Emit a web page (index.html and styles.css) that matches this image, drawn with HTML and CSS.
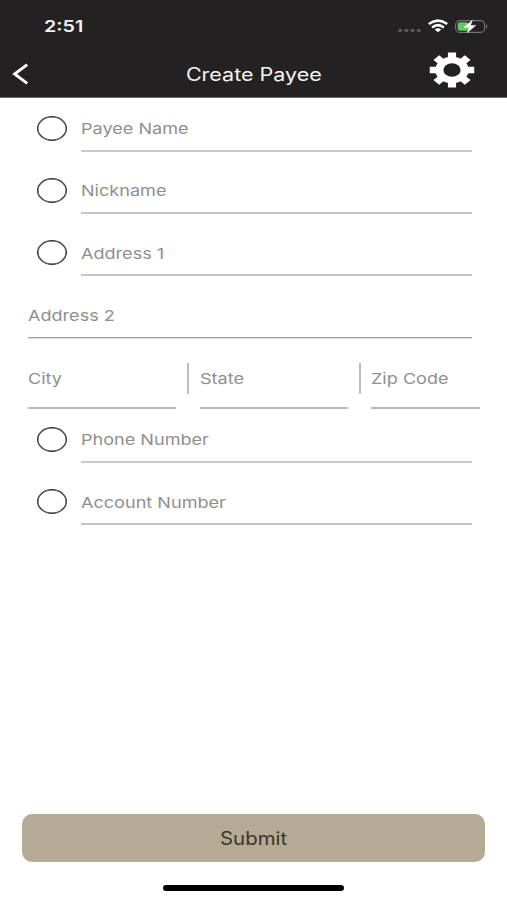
FILE: index.html
```html
<!DOCTYPE html>
<html lang="en">
<head>
<meta charset="utf-8">
<title>Create Payee</title>
<link rel="stylesheet" href="styles.css">
</head>
<body>
<div class="screen">
  <header class="header">
    <div class="status">
      <span class="time wide">2:51</span>
      <svg class="indicators" width="92" height="16" viewBox="0 0 92 16">
        <g fill="#5b595a"><ellipse cx="4.2" cy="12.4" rx="2.1" ry="1.7"/><ellipse cx="10.4" cy="12.4" rx="2.1" ry="1.7"/><ellipse cx="16.6" cy="12.4" rx="2.1" ry="1.7"/><ellipse cx="22.8" cy="12.4" rx="2.1" ry="1.7"/></g>
        <g fill="none" stroke="#fff" stroke-width="2.5"><path d="M32.8 6.1Q42 -.8 51.2 6.1"/><path d="M36.1 9.4Q42 4.9 47.9 9.4"/></g>
        <path d="M38.7 11.4Q42 8.9 45.3 11.4L42 14.3Z" fill="#fff"/>
        <rect x="59.6" y="2.6" width="29" height="11.8" rx="4" fill="none" stroke="#777576" stroke-width="1.1"/>
        <path d="M90 6.2q2.6 2.2 0 4.5Z" fill="#777576"/>
        <rect x="61.6" y="4.2" width="10.8" height="8.6" rx="2" fill="#5ccb63"/>
        <path d="M76.4 2.2L67.8 9.4H73L71.1 14.8L79.7 7.4H74.4Z" fill="#fff" stroke="#fff" stroke-width=".5"/>
      </svg>
    </div>
    <nav class="nav">
      <svg class="back" width="18" height="22" viewBox="0 0 18 22"><path d="M15.2 1.6L2.6 11L15.2 20.4" fill="none" stroke="#fff" stroke-width="2.9"/></svg>
      <h1 class="title"><span class="wide">Create Payee</span></h1>
      <svg class="gear" width="46" height="36" viewBox="-23 -18 46 36">
        <g transform="scale(1.27 1)" fill="#fff">
          <path fill-rule="evenodd" d="M0-13.2A13.2 13.2 0 1 0 0 13.2A13.2 13.2 0 1 0 0-13.2ZM0-6.8A6.8 6.8 0 1 1 0 6.8A6.8 6.8 0 1 1 0-6.8Z"/>
          <path id="tooth" d="M-3.2-17.5H3.2V-11H-3.2ZM-3.2 17.5H3.2V11H-3.2Z"/><use href="#tooth" transform="rotate(45)"/><use href="#tooth" transform="rotate(90)"/><use href="#tooth" transform="rotate(135)"/>
        </g>
      </svg>
    </nav>
  </header>
  <main class="form">
    <div class="row"><i class="ring"></i><div class="field heavy"><span class="wide">Payee Name</span></div></div>
    <div class="row"><i class="ring"></i><div class="field"><span class="wide">Nickname</span></div></div>
    <div class="row"><i class="ring"></i><div class="field"><span class="wide">Address 1</span></div></div>
    <div class="row"><div class="field dark"><span class="wide">Address 2</span></div></div>
    <div class="row split">
      <div class="field tall"><span class="wide">City</span></div><i class="divider"></i>
      <div class="field tall"><span class="wide">State</span></div><i class="divider"></i>
      <div class="field tall zip"><span class="wide">Zip Code</span></div>
    </div>
    <div class="row"><i class="ring"></i><div class="field heavy"><span class="wide">Phone Number</span></div></div>
    <div class="row"><i class="ring"></i><div class="field"><span class="wide">Account Number</span></div></div>
  </main>
  <footer class="footer">
    <button class="submit"><span class="wide">Submit</span></button>
    <div class="home"></div>
  </footer>
</div>
</body>
</html>
```
FILE: styles.css
```css
* { box-sizing: border-box; }
body { margin: 0; background: #fff; font-family: Inter, "Liberation Sans", sans-serif; }
.screen { width: 507px; height: 900px; display: flex; flex-direction: column; overflow: hidden; }
.wide { display: inline-block; white-space: nowrap; transform: scaleX(1.205); transform-origin: left center; }
.header { height: 98px; background: #232122; border-bottom: 1px solid #6b696a; color: #fff; }
.status { height: 50px; padding: 16px 19px 0 43.5px; display: flex; justify-content: space-between; align-items: flex-start; }
.time { font-size: 16px; line-height: 21px; font-weight: 600; transform: scaleX(1.23); color: #f2f2f2; }
.indicators { margin-top: 2px; }
.nav { height: 48px; padding: 2px 32px 0 12px; display: grid; grid-template-columns: 60px 1fr 60px; }
.back { margin-top: 11px; }
.title { margin: 11px 0 0; padding-left: 21px; font-size: 18px; line-height: 24px; font-weight: 400; text-align: center; color: #f4f4f4; }
.title .wide, .submit .wide { transform-origin: center; }
.title .wide { transform: scaleX(1.195); }
.submit .wide { transform: translateY(1px) scaleX(1.135); }
.gear { justify-self: end; }
.form { padding: 1px 35px 0 28px; flex: 1; }
.row { height: 62.3px; display: flex; }
.ring { flex: none; width: 30px; height: 25px; margin: 16.5px 14px 0 8.5px; border: 1px solid #333; box-shadow: inset 0 0 0 .5px #333; border-radius: 50%; }
.field { flex: 1; height: 52.6px; padding-top: 20px; font-size: 15px; line-height: 20px; color: #8f8f8f; border-bottom: 2px solid #c3c3c3; }
.heavy { border-color: #c9c9c9; }
.dark { height: 52px; border-bottom: 1px solid #a2a2a2; box-shadow: 0 1px #dedede; }
.split { margin-right: -9px; }
.tall { flex: none; width: 148px; height: 61px; padding-top: 20.5px; border-bottom-color: #b8b8b8; }
.zip { width: 109px; }
.divider { flex: none; width: 2px; height: 31px; margin: 14.5px 10.5px 0 11px; background: #bdbdbd; }
.footer { height: 86px; display: flex; flex-direction: column; align-items: center; }
.submit { width: 463px; height: 48px; padding: 0; border: 0; border-radius: 10px; background: #b5aa96; color: #3e3429; font: 18px/24px Inter, "Liberation Sans", sans-serif; }
.home { width: 181px; height: 6px; margin-top: 23px; border-radius: 3px; background: #000; }
```
